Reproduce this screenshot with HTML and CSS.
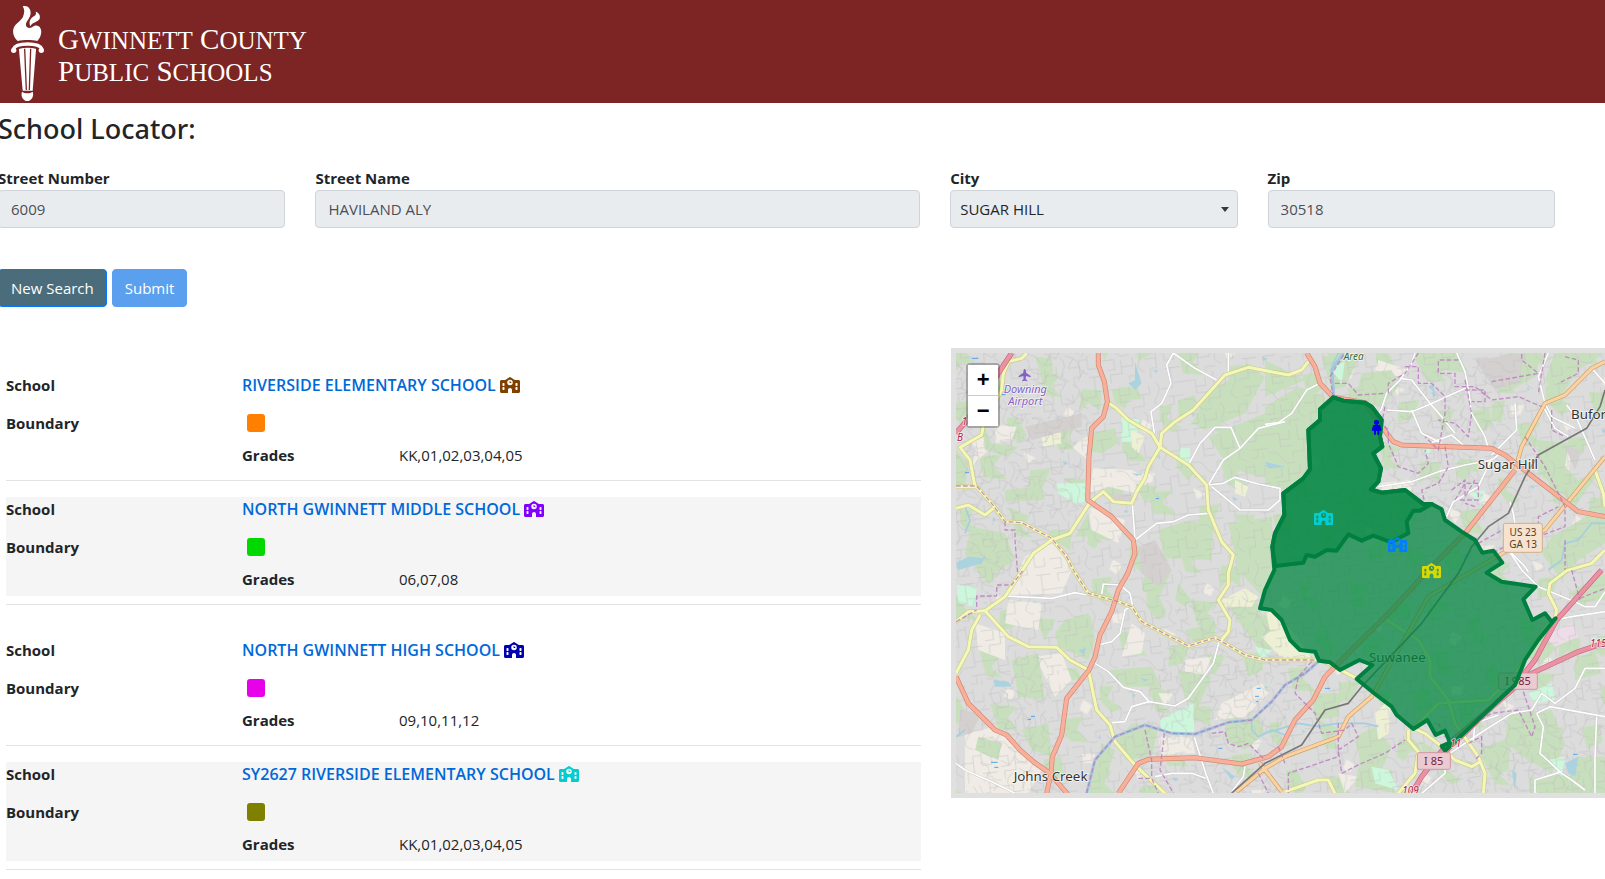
FILE: index.html
```html
<!DOCTYPE html>
<html lang="en">
<head>
    <meta charset="UTF-8">
    <meta name="viewport" content="width=device-width, initial-scale=1.0">
    <title>School Locator</title>
    <link rel="stylesheet" href="styles.css">
</head>
<body>
    <svg class="sprite" aria-hidden="true">
        <symbol id="school-icon" viewBox="0 0 640 512">
            <path d="M337.8 5.4C327-1.8 313-1.8 302.2 5.4L166.3 96H48C21.5 96 0 117.5 0 144V464c0 26.5 21.5 48 48 48H256V416c0-35.3 28.7-64 64-64s64 28.7 64 64v96H592c26.5 0 48-21.5 48-48V144c0-26.5-21.5-48-48-48H473.7L337.8 5.4zM96 192h32c8.8 0 16 7.2 16 16v64c0 8.8-7.2 16-16 16H96c-8.8 0-16-7.2-16-16V208c0-8.8 7.2-16 16-16zm400 16c0-8.8 7.2-16 16-16h32c8.8 0 16 7.2 16 16v64c0 8.8-7.2 16-16 16H512c-8.8 0-16-7.2-16-16V208zM96 320h32c8.8 0 16 7.2 16 16v64c0 8.8-7.2 16-16 16H96c-8.8 0-16-7.2-16-16V336c0-8.8 7.2-16 16-16zm400 16c0-8.8 7.2-16 16-16h32c8.8 0 16 7.2 16 16v64c0 8.8-7.2 16-16 16H512c-8.8 0-16-7.2-16-16V336zM232 176a88 88 0 1 1 176 0 88 88 0 1 1 -176 0zm88-48c-8.8 0-16 7.2-16 16v32c0 8.8 7.2 16 16 16h32c8.8 0 16-7.2 16-16s-7.2-16-16-16H336V144c0-8.8-7.2-16-16-16z"/>
        </symbol>
    </svg>

    <header class="header">
        <svg class="torch" viewBox="30 15 105 291" aria-hidden="true">
            <path fill="#fff" d="M68 19C84 14 95 28 91 45C88 58 76 66 78 76C80 86 92 86 102 78C116 72 127 86 123 102C121 112 117 117 112 123C95 119 70 119 53 123C42 114 36 98 41 84C46 70 62 64 69 50C74 38 74 28 68 19z"/>
            <path fill="#fff" d="M91 79C85 63 92 54 103 48C108 45 109 41 107 35C116 37 122 46 119 56C115 66 96 66 91 79z"/>
            <path fill="#fff" d="M56 138H109L98 272H68z"/>
            <path fill="none" stroke="#7d2424" stroke-width="4" d="M74 146L79 270M92 146L88 270"/>
            <path fill="none" stroke="#7d2424" stroke-width="17" d="M42 148C48 130 118 130 124 148"/>
            <path fill="none" stroke="#fff" stroke-width="10" d="M40 147C48 127 118 127 126 147"/>
            <circle fill="#fff" cx="41" cy="151" r="8"/>
            <circle fill="#fff" cx="124" cy="151" r="8"/>
            <path fill="#fff" d="M66 275C76 281 88 281 98 275C103 289 94 303 82 303S61 289 66 275z"/>
        </svg>
        <div class="brand">
            <div>G<small>WINNETT</small> C<small>OUNTY</small></div>
            <div>P<small>UBLIC</small> S<small>CHOOLS</small></div>
        </div>
    </header>

    <main>
        <form class="search">
            <h1>School Locator:</h1>
            <div class="fields">
                <div class="field">
                    <label for="number">Street Number</label>
                    <input type="text" id="number" class="control" value="6009" readonly>
                </div>
                <div class="field wide">
                    <label for="street">Street Name</label>
                    <input type="text" id="street" class="control" value="HAVILAND ALY" readonly>
                </div>
                <div class="field">
                    <label for="city">City</label>
                    <select id="city" class="control">
                        <option>SUGAR HILL</option>
                    </select>
                </div>
                <div class="field">
                    <label for="zip">Zip</label>
                    <input type="text" id="zip" class="control" value="30518" readonly>
                </div>
            </div>
            <div class="buttons">
                <button type="button" class="btn btn-new">New Search</button>
                <button type="submit" class="btn btn-submit" disabled>Submit</button>
            </div>
        </form>

        <div class="content">
            <div class="results">
                <section class="school">
                    <div class="line"><b>School</b><span><a href="#">RIVERSIDE ELEMENTARY SCHOOL</a> <svg class="icon brown"><use href="#school-icon"/></svg></span></div>
                    <div class="line"><b>Boundary</b><span class="swatch orange"></span></div>
                    <div class="line grades"><b>Grades</b><span>KK,01,02,03,04,05</span></div>
                </section>
                <hr>
                <section class="school shaded">
                    <div class="line"><b>School</b><span><a href="#">NORTH GWINNETT MIDDLE SCHOOL</a> <svg class="icon purple"><use href="#school-icon"/></svg></span></div>
                    <div class="line"><b>Boundary</b><span class="swatch green"></span></div>
                    <div class="line grades"><b>Grades</b><span>06,07,08</span></div>
                </section>
                <hr class="pair-end">
                <section class="school">
                    <div class="line"><b>School</b><span><a href="#">NORTH GWINNETT HIGH SCHOOL</a> <svg class="icon navy"><use href="#school-icon"/></svg></span></div>
                    <div class="line"><b>Boundary</b><span class="swatch magenta"></span></div>
                    <div class="line grades"><b>Grades</b><span>09,10,11,12</span></div>
                </section>
                <hr>
                <section class="school shaded">
                    <div class="line"><b>School</b><span><a href="#">SY2627 RIVERSIDE ELEMENTARY SCHOOL</a> <svg class="icon teal"><use href="#school-icon"/></svg></span></div>
                    <div class="line"><b>Boundary</b><span class="swatch olive"></span></div>
                    <div class="line grades"><b>Grades</b><span>KK,01,02,03,04,05</span></div>
                </section>
                <hr class="pair-end">
            </div>

            <div class="map">
                <svg class="tiles" viewBox="33 39 1947 1320" preserveAspectRatio="xMinYMin slice">
                    <defs>
                        <pattern id="streets" width="230" height="190" patternUnits="userSpaceOnUse" patternTransform="rotate(-7)">
                            <path class="street" d="M0 20H40V60H75M40 40H70V15M0 75Q30 70 40 95T80 110M95 0V45H130V20M110 45V80H75V100M150 10Q170 30 150 55T165 90M165 35H200V0M200 20H230M185 60H230M200 60V85H180M0 120H35V150H10M55 125V165H20V190M55 145H90V120M105 95Q125 115 110 135T125 170M125 130H160V110H185M160 130V160H140V190M185 100V140H215V115M185 165H230M200 165V190M75 190V175H105M215 90V75"/>
                        </pattern>
                        <pattern id="courts" width="170" height="210" patternUnits="userSpaceOnUse" patternTransform="rotate(28)">
                            <path class="street" d="M0 25Q25 5 45 30T90 35M45 30V65M60 50H85V75M110 0Q95 25 120 45T165 50M130 10H155V30M0 85Q30 70 50 90T95 95M25 80V110M70 92V130M110 70V105H150V80M130 105V135M0 150H40V180M20 150V130M60 150Q80 140 90 160T135 165M90 160V195H60M150 150V190H120M0 200H30"/>
                        </pattern>
                        <pattern id="groves" width="520" height="430" patternUnits="userSpaceOnUse" patternTransform="rotate(12)">
                            <path class="wood" d="M20 30L70 20L95 50L60 60L50 90L25 80zM150 60L190 50L180 90L230 110L200 130L160 100zM290 20L360 35L340 70L380 95L330 100L310 60zM430 60L490 50L500 110L460 95L440 130zM60 180L120 160L110 200L150 230L100 240L70 215zM230 190L260 180L300 230L280 260L240 230zM360 180L440 170L420 210L460 240L400 250L380 215zM30 310L80 290L100 340L60 370zM170 320L240 300L220 340L270 370L200 380zM330 330L390 310L380 370L340 390zM440 330L500 320L480 390z"/>
                            <path class="cream" d="M110 110L140 120L130 150L105 140zM400 120L425 130L420 155L395 150zM140 270L180 260L175 290L150 295zM300 280L340 290L320 310z"/>
                            <path class="water" d="M250 60L262 64L255 72zM180 200L186 215L178 213zM420 280L440 285L428 293zM110 390L124 384L120 396z"/>
                        </pattern>
                        <g id="minor">
                            <path d="M685 39L665 75L678 130L650 190L618 215L628 280M685 39L750 85L815 120M850 39V95M1020 245L940 265L885 325L835 360L790 435L835 430L870 412L940 432L1005 445V480L970 510H885L800 440M730 375L765 310L810 262H858L885 325M562 490L570 600L635 550L685 545L730 525L790 520M570 600L590 585M180 768L320 775L390 758L425 765M470 762L475 732L525 735L555 760L562 795L540 810L525 880L500 905L460 915M450 970L490 995L535 1042L585 1055L612 1085L560 1100L540 1145L500 1148M612 1085L690 1098L730 1075L805 970L822 905M748 1192L782 1300L805 1360M33 1270L60 1290L150 1330L210 1360M630 1310L680 1300H740L782 1315M900 1280L895 1310L860 1355"/>
                            <path d="M960 253L1000 248L1040 220L1085 150L1125 130M1275 260L1310 205L1325 160L1365 120L1400 70L1410 39M1325 210L1400 215L1450 195L1570 140M1400 210L1430 280L1490 310M1365 115L1400 120L1455 190L1490 230L1530 280M1535 39L1560 95L1570 145L1580 220L1620 290L1630 325M1425 320L1520 285L1560 320M1710 190L1715 270L1660 325L1640 345M1660 345L1640 360L1560 375L1480 395L1400 425L1300 440M1640 355L1600 440L1525 485L1505 530M1695 485L1705 520L1715 580L1700 640L1740 680L1750 695M1810 39L1780 110L1800 190L1820 230L1890 265M1865 195L1895 235L1950 360M1945 90L1980 130M1795 200L1830 265L1870 290"/>
                            <path d="M1690 630L1730 690L1780 740L1890 785L1920 800H1950L1980 755M1830 840L1880 830L1980 815M1980 985L1920 985L1890 1045L1830 1090L1790 1060L1760 1110L1700 1120L1620 1170L1500 1250M1775 1120L1795 1160L1785 1240L1850 1300L1880 1320L1920 1350M1775 1120L1815 1100L1980 1130M1850 1295L1770 1320V1360M1955 1130L1950 1250V1360M1660 1125L1590 1150L1585 1200M1430 1360L1500 1300V1270"/>
                        </g>
                        <g id="secondary">
                            <path d="M485 185L515 205L550 240L620 280L645 322L730 375L785 435L790 510L830 605L865 645L850 700V735L820 780L855 840L850 875L825 905"/>
                            <path d="M1090 65L1070 90L1030 105L910 82L840 105L745 210L690 245L650 280L645 322L610 380L600 415L575 455L560 490L505 485L475 455L435 487L375 580L320 600L265 640L180 770L120 812"/>
                            <path d="M245 40L230 55L190 65L175 100L170 150L115 255L110 285L45 322L75 360L90 440M33 440H95L140 490L180 545L230 548L320 595L365 650L385 690L430 760L520 785L560 800L590 845L730 918L810 893L900 945L960 960H1130L1235 1015"/>
                            <path d="M33 505L70 495L120 525L145 505M33 845L70 815L120 812L190 890L250 920L335 922L375 960L430 990L455 1110L495 1155L510 1205L570 1275L665 1365M33 1000L70 930L80 870L105 825"/>
                            <path d="M1020 1355L1120 1320H1150L1170 1360M1390 1170V1200L1420 1235L1410 1300L1360 1360M1405 1165L1440 1180L1490 1220L1530 1260L1580 1280L1605 1265M1325 840L1420 900L1455 960V1010L1510 1080L1530 1150L1600 1250L1620 1300L1615 1360M1405 1165L1480 1090L1630 1080L1720 990L1810 850M1980 630L1940 670L1865 692L1815 730L1810 760L1835 810L1830 835M1950 390L1975 460L1980 500"/>
                        </g>
                        <g id="trunk">
                            <path d="M1980 65L1940 85L1860 165L1800 190L1730 320L1712 385M1980 350L1800 570L1690 630L1450 770L1400 860L1280 1070L1210 1130L1180 1190L1020 1250L960 1285L875 1355M945 1270L1010 1355"/>
                        </g>
                        <g id="primary">
                            <path d="M460 39V75L478 125L487 185L475 230L440 265L432 350L428 480L500 530L565 600L570 640L548 700L520 750L500 815L465 885L450 950L432 990L365 1075L350 1185L322 1250L318 1300L303 1370"/>
                            <path d="M33 1010L70 1090L150 1170L185 1185L225 1230L265 1265L315 1300L370 1365M520 1360L580 1270L610 1258L750 1253L890 1272L970 1250L1010 1220L1050 1140L1105 1080L1140 1010L1165 985L1350 800L1450 690L1560 580L1710 390"/>
                            <path d="M1085 39L1110 80L1125 130L1165 172L1260 188L1310 260L1345 305L1370 315L1640 325L1680 345L1770 415L1900 515L1980 530"/>
                        </g>
                        <g id="motorway">
                            <path d="M200 39L160 100L100 200L33 280M1970 690L1835 840L1770 960L1710 1035L1500 1235M1980 908L1900 935L1760 1000L1500 1220L1430 1310L1400 1360"/>
                        </g>
                    </defs>

                    <!-- land cover -->
                    <rect class="land" x="33" y="39" width="1947" height="1320"/>
                    <rect fill="url(#groves)" x="33" y="39" width="1947" height="1320"/>
                    <path class="cream" d="M430 500L540 540L520 610L440 570zM445 385L560 390L615 420L575 460L490 440L430 460zM240 650L330 600L380 690L350 760L190 765zM60 1180L150 1160L290 1290L250 1359H60zM190 780L290 790L280 870L180 850zM130 330L80 380L100 300zM440 280L380 320L440 370zM270 950L350 940L380 1020L330 1070zM560 850L600 880L590 940L530 950zM830 1090L950 1030L970 1060L900 1130L810 1140zM150 255L215 260L200 300L150 310zM640 1190H740L750 1240L650 1245zM90 850L180 880V960L100 930zM640 1060H685L660 1100zM720 960L800 950L770 1020L720 1000z"/>
                    <path class="cream" d="M1300 430L1400 420L1370 450L1310 450zM1800 350L1880 330L1870 400L1800 380zM1500 500L1550 520L1530 550zM1300 60L1390 90L1360 110L1290 90zM1240 1310L1180 1300L1200 1359zM1770 1190L1810 1240L1780 1270z"/>
                    <path class="wood" d="M33 330L70 370L60 440H33zM110 240L140 310L220 320L190 350L120 330zM270 50L320 55L325 95L290 105zM440 280L510 265L520 310L470 340L440 335zM500 150L530 145L535 200L510 190zM700 180L750 165L760 210L700 240zM790 155L920 85L960 110L900 220L780 270L740 250zM790 290L960 220L1020 270L1000 420L900 400L830 350zM640 570L720 545L805 550L800 660L660 655zM180 450L290 440L300 480L180 485zM80 560L180 580L210 660L120 720L60 640zM440 590L430 520L390 590zM570 430L640 440L600 490zM850 550L980 530L985 690L960 780L880 690z"/>
                    <path class="wood" d="M960 60L1080 120L960 170zM960 200L1060 140L1140 170L1125 260L1090 330L1090 400L1020 450L960 430zM1130 50L1250 39L1200 140L1160 150zM1250 100L1340 90L1360 140L1310 200L1230 180zM1400 39H1540L1570 100L1500 90L1440 110zM1690 39H1790L1770 110L1700 150L1640 130zM1830 39H1980L1900 90L1840 180L1800 120zM1820 180L1880 190L1850 230zM1640 190L1680 180L1670 250L1640 240zM1780 300L1870 310L1860 380L1900 420L1960 400L1890 500L1830 440L1780 400zM1820 590L1940 520L1980 530V610L1900 660L1850 720L1790 640z"/>
                    <path class="wood" d="M850 790L920 750L960 850L1020 880L960 950L870 830zM720 870L810 850V890L750 910zM490 990L620 980L650 1040L540 1040zM200 960L280 940L300 1080L220 1070zM230 1170L310 1150L320 1250L260 1230zM100 1190L170 1210L160 1260L90 1230zM560 1150L640 1160L620 1250L540 1260L520 1200zM840 1150L940 1130L960 1180L900 1230L840 1200zM700 990L800 1010L760 1100L720 1080zM600 700L680 690L640 780L590 750zM330 880L360 840L430 820L450 900L430 960L340 920zM700 730L740 780L720 800L690 780zM470 1210L510 1230L470 1359H430z"/>
                    <path class="wood" d="M1100 1060L1190 1060L1180 1130L1110 1140zM1230 1190L1290 1160L1340 1220L1310 1290L1250 1280zM1240 1280L1340 1290L1350 1359L1230 1340zM1690 1120L1820 1110L1860 1210L1820 1300L1730 1250L1680 1200zM1600 1230L1700 1190L1690 1290L1640 1310zM1870 760L1980 700V780L1910 790zM1740 950L1810 870L1860 900L1790 970zM1890 960L1950 930L1970 1000L1890 1020zM1890 1250H1980V1359H1880zM1810 1310L1870 1300L1890 1359H1780zM1420 1200L1490 1240L1450 1280z"/>
                    <path class="park" d="M335 430H425V485L390 490L340 460zM530 230L585 240L570 305H530zM705 325H735V365H705zM645 1140L745 1090L748 1180H650zM1160 90L1200 60L1190 130zM1280 1280L1330 1290L1360 1350L1290 1330zM1750 1060L1820 1030L1830 1080L1770 1090zM35 735L95 740L90 800L40 790zM1570 460L1620 450L1610 490zM1430 330L1460 320L1450 350zM1810 1260L1860 1250L1850 1310zM930 920L980 930L950 960z"/>
                    <path class="field-area" d="M285 270L345 260L350 310L295 320zM560 270L600 290L580 340L560 320zM870 420L910 440L900 470L870 460zM830 780L900 745L940 770L920 800L840 800zM950 890L1020 850L1090 930L1100 970L1000 945zM1290 1120L1340 1070L1330 1180L1300 1200zM960 800L1000 810L1040 940L980 900z"/>
                    <path class="industrial" d="M580 620L630 600L680 690L640 740L590 700zM240 260L410 220L410 260L260 300zM1590 60L1740 39L1720 130L1650 150zM1860 320L1910 330L1890 390zM500 462H560V480H500zM45 1110L110 1120L80 1180L40 1190z"/>
                    <path class="retail" d="M1800 890L1880 850L1900 890L1830 920z"/>
                    <rect class="texture-a" x="33" y="39" width="1947" height="1320"/>
                    <path class="texture-b" d="M33 39H430V480L300 600L120 800H33zM700 800L940 760L1020 940V1359H560L640 1000zM1320 100L1640 80L1720 380L1560 540L1330 430zM1400 1250L1980 1000V1359H1400zM120 1010L300 900L350 1359H100z"/>
                    <path class="water" d="M570 65L580 100L590 130L570 150L550 130L570 120zM33 670L70 650L120 655L110 670L40 690zM145 1020L190 1025L200 1040L150 1040zM560 400L590 402L575 408zM585 1015L612 1018L600 1025zM950 375L1015 378L980 385zM400 930L425 925L415 945zM1450 140L1465 130L1470 160zM1860 1270L1900 1250L1890 1310L1870 1300zM1700 1290L1715 1300L1710 1350zM830 1280L870 1310L860 1320zM960 365L1020 380L970 385zM1550 650L1580 630L1570 660z"/>
                    <path class="stream" d="M33 1190L60 1170M60 500L75 540L60 580M960 1180L1060 1150L1120 1160L1180 1150L1260 1150L1300 1160M920 1140V1170L940 1190L980 1170L1020 1185M1980 550L1940 550L1900 600L1860 610L1850 660L1810 690M1180 39L1160 80"/>
                    <path class="pond" d="M80 55H100M170 164H182M60 398H72M632 476H642M935 1045H947M930 1069H942M932 1085H940M820 1225H832M258 1129H270M248 1138H258M138 1267H158M148 1282H160M1140 1045H1155M1885 1243H1898"/>

                    <!-- roads -->
                    <use href="#minor" class="minor-casing"/>
                    <use href="#minor" class="minor"/>
                    <use href="#secondary" class="secondary-casing"/>
                    <use href="#secondary" class="secondary"/>
                    <use href="#trunk" class="trunk-casing"/>
                    <use href="#trunk" class="trunk"/>
                    <use href="#primary" class="primary-casing"/>
                    <use href="#primary" class="primary"/>
                    <use href="#motorway" class="motorway-casing"/>
                    <use href="#motorway" class="motorway"/>
                    <path class="rail" d="M1980 150L1965 200L1925 265L1780 345L1740 410L1690 520L1630 560L1580 620L1540 700L1430 850L1250 1040L1210 1090L1140 1110L1070 1215L960 1270L860 1359"/>
                    <path class="river" d="M425 1359L450 1260L510 1190L600 1155L680 1180L750 1182L850 1147L920 1140L980 1085L1020 1035L1080 1000L1120 965M1165 180V140L1160 90L1195 39"/>

                    <!-- city limits -->
                    <path class="limit" d="M33 438H95L140 490L180 545L230 548L320 595L365 650L385 690L430 760L520 785L560 800L590 845L730 918L810 893L900 945L960 960H1120M425 1359L450 1260L510 1190L600 1155L680 1180L750 1182L850 1147L920 1140L980 1085L1020 1035L1080 1000L1120 965M180 545V570H210V600L218 700M33 845L95 810M95 800V768H155V735H200L235 690M600 1170L620 1260V1310M658 1180L645 1290L685 1359M580 1315H620L640 1359M800 1180L840 1175L850 1210L880 1220L910 1210L960 1260M940 1300L970 1359"/>
                    <path class="limit" d="M1165 172L1155 110L1200 39M1170 130H1210L1240 165L1320 160M1320 200L1310 250L1330 270V310L1360 380L1420 400L1450 370L1440 330M1420 39L1380 100L1330 130V160M1380 80H1420V130H1460L1500 170V220L1480 330L1440 290M1500 320L1510 380L1480 430L1430 450L1440 490M1560 120L1580 220L1570 290L1530 250L1480 240M1560 150H1620V185H1580M1540 60H1480V100H1530V140H1590L1640 180L1720 170L1790 200M1640 125L1780 100L1730 60V39M1800 39L1780 160M1860 50L1900 60V100L1840 130M1740 290L1800 380L1860 500V560L1780 590V530L1840 500M1820 210V270L1860 290M1520 450L1560 420V470L1590 420M1590 500L1560 490M1530 480L1560 430H1600V480H1540M1860 600V690M1600 610L1690 560L1680 620L1640 640"/>
                    <path class="limit" d="M1100 965L1060 1010L1050 1060L1110 1120L1130 1180L1200 1170L1220 1150L1240 1190L1180 1230L1190 1300L1250 1270L1320 1240L1380 1200M1180 1150V1250L1030 1300V1359M1560 1180L1590 1150L1640 1120L1720 1110L1760 1190L1770 1160L1730 1040M1570 1210L1610 1190V1240L1590 1260M1880 690L1905 780M1480 1150L1500 1190M1905 775L1980 745M1000 1220L1020 1270"/>

                    <!-- labels below the boundaries -->
                    <g class="town">
                        <text x="1272" y="966">Suwanee</text>
                    </g>
                    <rect class="shield-red" x="1661" y="999" width="116" height="49" rx="5"/>
                    <text class="shield-red-text" x="1719" y="1035">I 985</text>

                    <!-- attendance boundaries -->
                    <path class="zone" d="M1165 172L1195 182L1260 188L1280 200L1310 240L1305 290L1312 320L1285 340L1308 385L1300 425L1278 448L1310 458L1380 450L1435 492H1460L1490 508L1500 540L1550 575L1590 600L1612 638L1645 632L1672 668L1625 698L1670 725L1772 740L1735 778L1762 840L1800 820L1820 845L1832 835L1780 900L1740 960L1710 1035L1500 1232L1490 1218L1515 1208L1500 1172L1472 1185L1447 1140L1405 1167L1355 1125L1340 1100L1290 1062L1235 1017L1282 975L1243 960L1185 990L1155 967L1122 962L1110 935L1065 930L1035 900L1010 840L980 810L945 805L960 750L988 690L982 620L990 580L1018 525L1015 460L1075 415L1095 388L1090 270L1125 240V208z"/>
                    <path class="zone zone-inner" d="M1165 172L1195 182L1260 188L1280 200L1310 240L1305 290L1312 320L1285 340L1308 385L1300 425L1278 448L1310 458L1380 450L1435 492H1460L1425 512H1405L1385 545L1390 580L1360 595L1340 607L1285 587L1250 602L1210 583L1175 632L1145 630L1110 650L1085 645L1075 668L990 678L982 620L990 580L1018 525L1015 460L1075 415L1095 388L1090 270L1125 240V208z"/>

                    <!-- labels above -->
                    <g class="town">
                        <text x="1598" y="388">Sugar Hill</text>
                        <text x="1878" y="238">Buford</text>
                        <text x="206" y="1323">Johns Creek</text>
                    </g>
                    <text class="area" x="1196" y="60">Area</text>
                    <g class="airport">
                        <text x="241" y="159">Downing</text>
                        <text x="241" y="195">Airport</text>
                        <path d="M239 87C242 87 243 91 243 98L257 108V112L243 108L242 117L247 122V124L239 122L231 124V122L236 117L235 108L221 112V108L235 98C235 91 236 87 239 87z"/>
                    </g>
                    <g class="exit">
                        <text x="50" y="255">10</text>
                        <text x="36" y="302">B</text>
                        <text x="1372" y="1362">109</text>
                        <text x="1935" y="920">115</text>
                        <text x="1516" y="1222">11</text>
                    </g>
                    <rect class="shield" x="1675" y="550" width="117" height="87" rx="6"/>
                    <text class="shield-text" x="1734" y="588">US 23</text>
                    <text class="shield-text" x="1734" y="624">GA 13</text>
                    <rect class="shield-red" x="1417" y="1238" width="99" height="50" rx="5"/>
                    <text class="shield-red-text" x="1466" y="1275">I 85</text>

                    <!-- markers -->
                    <use href="#school-icon" class="teal" x="1107" y="510" width="57" height="46"/>
                    <use href="#school-icon" class="blue" x="1329" y="591" width="57" height="46"/>
                    <use href="#school-icon" class="yellow" x="1431" y="669" width="57" height="46"/>
                    <path class="person" d="M1295 239A8 8 0 1 1 1294 239zM1285 255H1305L1310 270L1305 274L1303 271V284H1297V273H1293V284H1287V271L1284 274L1280 270z"/>
                </svg>
                <div class="zoom">
                    <button type="button" aria-label="Zoom in">+</button>
                    <button type="button" aria-label="Zoom out">&minus;</button>
                </div>
            </div>
        </div>
    </main>
</body>
</html>
```
FILE: styles.css
```css
* {
    box-sizing: border-box;
}
body {
    margin: 0;
    font-family: "Open Sans", "Noto Sans", sans-serif;
    font-size: 15px;
    line-height: 24px;
    color: #212529;
    background-color: #fff;
    overflow-x: hidden;
}
.sprite {
    display: none;
}
.header {
    display: flex;
    align-items: flex-start;
    gap: 13px;
    padding: 5px 10px 1px;
    background-color: #7d2424;
}
.torch {
    display: block;
    width: 35px;
    height: 97px;
}
.brand {
    padding-top: 19px;
    font-family: "Liberation Serif", serif;
    font-size: 29px;
    line-height: 31px;
    color: #fff;
}
.brand small {
    font-size: 25px;
}
.search {
    margin: 0 50px 0 -2px;
}
h1 {
    margin: 0;
    padding: 9px 0 25px;
    font-family: "Noto Sans", sans-serif;
    font-size: 27px;
    line-height: 34px;
    font-weight: 500;
}
.fields {
    display: grid;
    grid-template-columns: repeat(5, 1fr);
    gap: 30px;
}
.wide {
    grid-column: span 2;
}
.field label {
    display: block;
    padding-bottom: 4px;
    line-height: 15px;
    font-weight: 700;
}
.control {
    display: block;
    width: 100%;
    height: 38px;
    padding: 6px 12px;
    font: inherit;
    color: #495057;
    background-color: #e9ecef;
    border: 1px solid #ced4da;
    border-radius: 4px;
}
select.control {
    appearance: none;
    padding: 6px 9px;
    color: #212529;
    background-image: url("data:image/svg+xml,%3Csvg xmlns='http://www.w3.org/2000/svg' viewBox='0 0 8 5'%3E%3Cpath fill='%23343a40' d='M0 0h8L4 5z'/%3E%3C/svg%3E");
    background-repeat: no-repeat;
    background-position: right 8px center;
    background-size: 8px 5px;
}
.buttons {
    display: flex;
    gap: 5px;
    padding: 41px 0;
}
.btn {
    height: 38px;
    padding: 6px 12px;
    font: inherit;
    color: #fff;
    border: 1px solid #007bff;
    border-radius: 4px;
    cursor: pointer;
}
.btn-new {
    background-color: #4b6c7b;
}
.btn-submit {
    background-color: #5aa0ee;
    border-color: #5aa0ee;
}
.content {
    display: grid;
    grid-template-columns: 7fr 5fr;
    align-items: start;
    gap: 30px;
    padding-left: 6px;
}
.results {
    padding-top: 25px;
}
.school {
    padding-bottom: 5px;
}
.shaded {
    background-color: #f5f5f5;
}
.line {
    display: grid;
    grid-template-columns: 236px 1fr;
    margin-bottom: 14px;
}
.line:nth-child(2) {
    margin-bottom: 8px;
}
.grades {
    grid-template-columns: 157px 1fr;
    margin: 0 0 0 236px;
}
.line a {
    font-size: 16px;
    font-weight: 600;
    color: #0069d9;
    text-decoration: none;
}
.icon {
    width: 20px;
    height: 16px;
    vertical-align: -2px;
}
.swatch {
    width: 18px;
    height: 18px;
    margin: 3px 5px;
    border-radius: 3px;
}
hr {
    height: 1px;
    margin: 8px 0 16px;
    border: 0;
    background-color: #e3e3e3;
}
.pair-end {
    margin-bottom: 33px;
}
.brown { fill: #804000; }
.purple { fill: #8000ff; }
.navy { fill: #0000b3; }
.teal { fill: #00ced1; }
.blue { fill: #0080ff; }
.yellow { fill: #d9d900; }
.orange { background-color: #ff8000; }
.green { background-color: #00d900; }
.magenta { background-color: #e800e8; }
.olive { background-color: #808000; }

.map {
    position: relative;
    border: 5px solid #e0e0e0;
    border-right: 0;
}
.tiles {
    display: block;
    width: 100%;
    height: 440px;
}
.zoom {
    position: absolute;
    top: 10px;
    left: 10px;
    border: 2px solid rgba(0, 0, 0, 0.25);
    border-radius: 4px;
}
.zoom button {
    display: block;
    width: 30px;
    height: 30px;
    padding: 0;
    font: bold 22px/28px "Liberation Sans", sans-serif;
    color: #000;
    background-color: #fff;
    border: 0;
}
.zoom button:first-child {
    height: 31px;
    border-bottom: 1px solid #ccc;
}

/* map drawing */
.land { fill: #dcdcdc; }
.cream { fill: #f0ece5; }
.wood { fill: #c8dfbd; }
.park { fill: #cdf7dc; }
.field-area { fill: #eef0d5; }
.industrial { fill: #d3d0cf; }
.retail { fill: #eddde8; }
.water { fill: #aad3df; }
.texture-a { fill: url(#streets); }
.texture-b { fill: url(#courts); }
.street, .stream, .pond, .rail, .river, .limit,
#minor, #secondary, #trunk, #primary, #motorway {
    fill: none;
    stroke-linejoin: round;
}
.street {
    stroke: #bdbdbd;
    stroke-width: 2;
    opacity: 0.7;
}
.stream {
    stroke: #a4cfe0;
    stroke-width: 5;
}
.pond {
    stroke: #4ba4f0;
    stroke-width: 3;
}
.minor-casing {
    stroke: #c4c4c4;
    stroke-width: 7;
}
.minor {
    stroke: #fff;
    stroke-width: 5;
}
.secondary-casing {
    stroke: #c9cd86;
    stroke-width: 13;
}
.secondary {
    stroke: #f4f7b9;
    stroke-width: 9;
}
.trunk-casing {
    stroke: #cf9d68;
    stroke-width: 13;
}
.trunk {
    stroke: #fbd3a1;
    stroke-width: 9;
}
.primary-casing {
    stroke: #d28672;
    stroke-width: 15;
}
.primary {
    stroke: #f8b09a;
    stroke-width: 11;
}
.motorway-casing {
    stroke: #cf6580;
    stroke-width: 16;
}
.motorway {
    stroke: #e892a2;
    stroke-width: 12;
}
.rail {
    stroke: #777;
    stroke-width: 5;
}
.river {
    stroke: #a3c6dc;
    stroke-width: 9;
}
.limit {
    stroke: #b872bd;
    stroke-width: 4;
    stroke-dasharray: 14 7;
    opacity: 0.75;
}
.zone {
    fill: #00853f;
    fill-opacity: 0.74;
    stroke: #008040;
    stroke-width: 12;
    stroke-linejoin: round;
}
.zone-inner {
    fill-opacity: 0.5;
}
.tiles text {
    font-family: "Noto Sans", sans-serif;
    paint-order: stroke;
    stroke: rgba(255, 255, 255, 0.7);
    stroke-width: 5px;
}
.town text {
    font-size: 40px;
    fill: #333;
}
.tiles .area {
    font-size: 30px;
    font-style: italic;
    fill: #3b6b3b;
}
.airport {
    font-size: 33px;
    font-style: italic;
    text-anchor: middle;
    fill: #8461c4;
}
.exit {
    font-size: 30px;
    font-style: italic;
    fill: #b0243f;
}
.shield {
    fill: #f5e3cf;
    stroke: #d1ae8c;
    stroke-width: 3;
}
.shield-red {
    fill: #ebcbd2;
    stroke: #d495a5;
    stroke-width: 3;
}
.tiles .shield-text,
.tiles .shield-red-text {
    font-size: 30px;
    text-anchor: middle;
    fill: #5a3c1e;
    stroke: none;
}
.tiles .shield-red-text {
    font-size: 33px;
    fill: #7a1f38;
}
.person {
    fill: #0000e0;
}
```
